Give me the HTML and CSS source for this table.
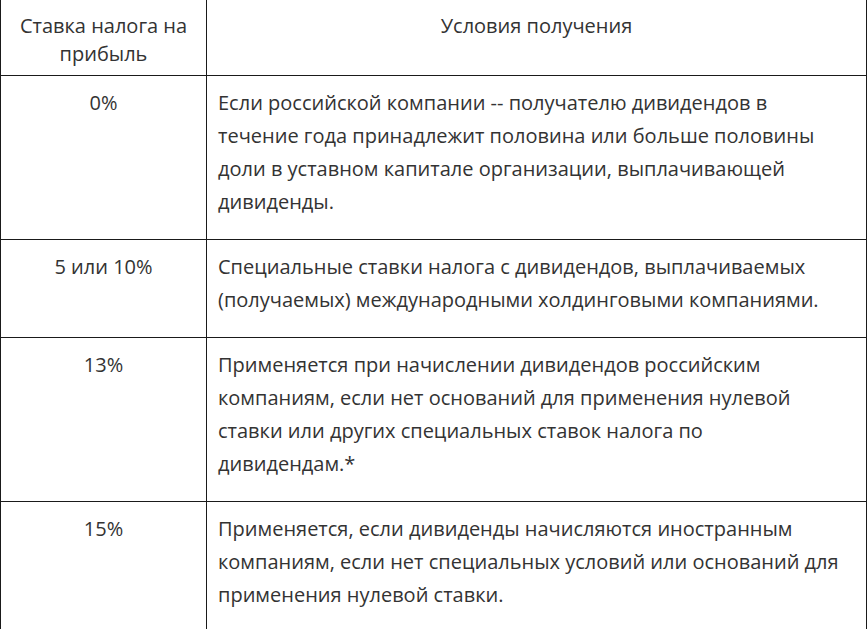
FILE: index.html
```html
<!DOCTYPE html>
<html lang="ru">
<head>
<meta charset="utf-8">
<link rel="stylesheet" href="styles.css">
</head>
<body>
<table class="tax">
  <thead>
    <tr>
      <th class="rate">Ставка налога на<br>прибыль</th>
      <th class="cond">Условия получения</th>
    </tr>
  </thead>
  <tbody>
    <tr>
      <td class="rate">0%</td>
      <td class="cond">Если российской компании -- получателю дивидендов в<br>течение года принадлежит половина или больше половины<br>доли в уставном капитале организации, выплачивающей<br>дивиденды.</td>
    </tr>
    <tr>
      <td class="rate">5 или 10%</td>
      <td class="cond">Специальные ставки налога с дивидендов, выплачиваемых<br>(получаемых) международными холдинговыми компаниями.</td>
    </tr>
    <tr>
      <td class="rate">13%</td>
      <td class="cond">Применяется при начислении дивидендов российским<br>компаниям, если нет оснований для применения нулевой<br>ставки или других специальных ставок налога по<br>дивидендам.*</td>
    </tr>
    <tr>
      <td class="rate">15%</td>
      <td class="cond">Применяется, если дивиденды начисляются иностранным<br>компаниям, если нет специальных условий или оснований для<br>применения нулевой ставки.</td>
    </tr>
  </tbody>
</table>
</body>
</html>
```

FILE: styles.css
```css
html, body {
  margin: 0;
  padding: 0;
  background: #fff;
}
.tax {
  border-collapse: collapse;
  width: 867px;
  table-layout: fixed;
  font-family: "Open Sans", "Noto Sans", sans-serif;
  font-size: 20px;
  color: #333;
}
.tax th, .tax td {
  border: 1px solid #1a1a1a;
  vertical-align: top;
  font-weight: 400;
}
.tax thead th {
  border-top: none;
  line-height: 28px;
  padding: 12px 4px 7px;
  text-align: center;
}
.tax td {
  line-height: 33px;
  padding: 10px 4px 21px 11px;
}
.tax .rate {
  width: 197px;
  text-align: center;
}
.tax td.rate {
  padding-left: 4px;
}
.tax td.cond {
  text-align: left;
  white-space: nowrap;
}
```
